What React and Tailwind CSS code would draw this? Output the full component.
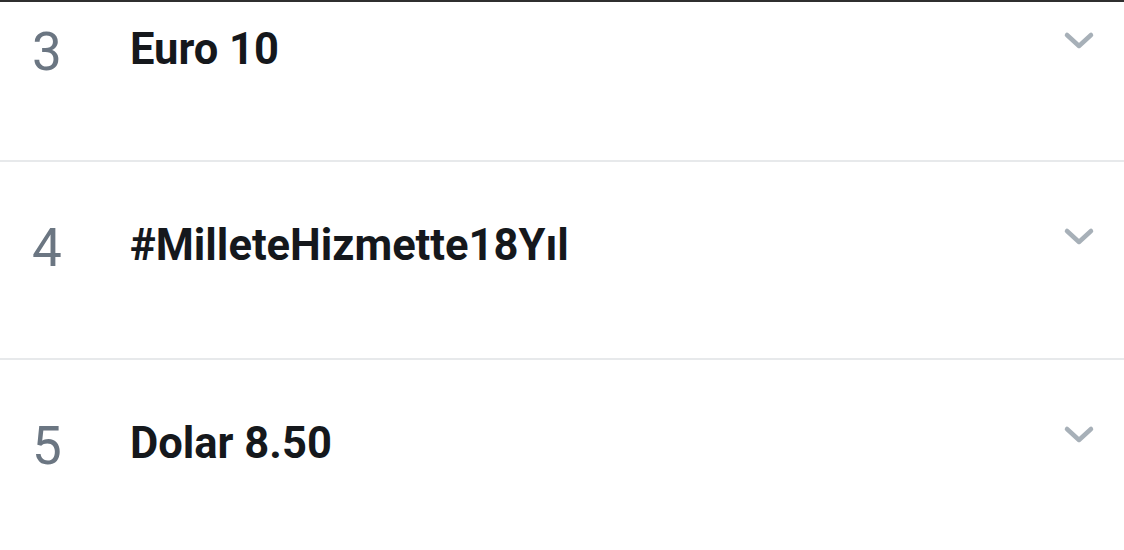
import React from "react"

const trends = [
  { rank: 3, title: "Euro 10" },
  { rank: 4, title: "#MilleteHizmette18Yıl" },
  { rank: 5, title: "Dolar 8.50" },
]

function Chevron() {
  return (
    <svg width="34" height="24" viewBox="0 0 34 24" fill="none">
      <polyline
        points="5,5 17,16 29,5"
        stroke="#a7b0b8"
        strokeWidth="4.5"
        strokeLinecap="round"
        strokeLinejoin="round"
      />
    </svg>
  )
}

export default function App() {
  return (
    <div className="w-[1124px] h-[550px] overflow-hidden bg-white font-['Roboto',sans-serif]">
      <div className="h-[2px] bg-[#2f2f2f]" />
      {trends.map((t, i) => (
        <div
          key={t.rank}
          className={
            i === 0
              ? "h-[160px] pt-[24px] pl-[32px] pr-[28px] flex items-start border-b-2 border-[#e7e9eb]"
              : i === 1
              ? "h-[198px] pt-[60px] pl-[32px] pr-[28px] flex items-start border-b-2 border-[#e7e9eb]"
              : "h-[198px] pt-[60px] pl-[32px] pr-[28px] flex items-start"
          }
        >
          <span className="w-[98px] shrink-0 text-[53px] leading-none text-[#6b7682]">{t.rank}</span>
          <span className="flex-1 mt-[2px] text-[43.5px] leading-none font-bold text-[#15181c]">{t.title}</span>
          <span className="mt-[4px]">
            <Chevron />
          </span>
        </div>
      ))}
    </div>
  )
}
